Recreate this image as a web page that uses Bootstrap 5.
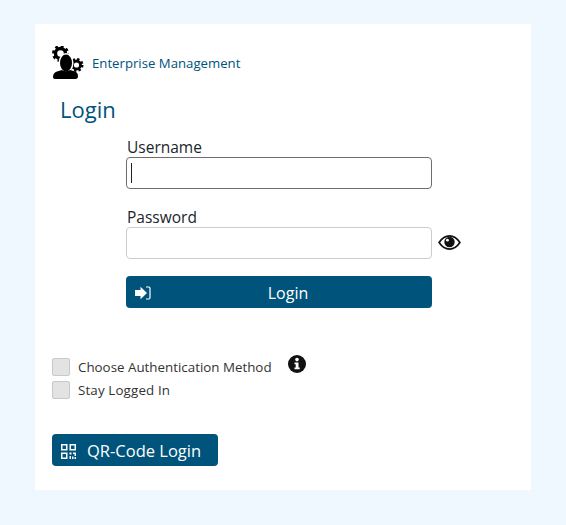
<!DOCTYPE html>
<html lang="en">
<head>
    <meta charset="UTF-8">
    <meta name="viewport" content="width=device-width, initial-scale=1.0">
    <title>Login</title>
    <link href="https://cdn.jsdelivr.net/npm/bootstrap@5.3.0/dist/css/bootstrap.min.css" rel="stylesheet">
    <style>
        body {
            background: #f0f8ff;
            font-family: "Open Sans", "Noto Sans", sans-serif;
            color: #212529;
            height: 525px;
            overflow: hidden;
        }
        .login-panel {
            width: 496px;
            height: 466px;
            margin: 24px 0 0 35px;
            padding: 21px 17px 0;
            background: #fff;
        }
        .brand-row { height: 36px; }
        .brand-name { font-size: 13.2px; color: #00537a; margin-left: 8px; margin-top: 1px; }
        .page-title { font-size: 22px; line-height: 30px; color: #00537a; font-weight: 400; margin: 13px 0 0 8px; }
        .login-form { width: 306px; margin: 13px 0 0 74px; position: relative; }
        .field-label { font-size: 15.5px; line-height: 20px; margin: 0; padding-left: 1px; display: block; color: #212529; }
        .password-label { margin-top: 18px; }
        .login-input {
            height: 32px;
            border: 1px solid #ccc;
            border-radius: 4px;
            padding: 0 5px;
            box-shadow: none;
        }
        .login-input:focus { border-color: #6e6e6e; box-shadow: none; }
        .user-wrap { position: relative; }
        .text-caret { position: absolute; left: 5px; top: 6px; width: 1px; height: 20px; background: #222; }
        .eye-btn { position: absolute; left: 312px; top: 7px; line-height: 0; }
        .pw-wrap { position: relative; }
        .brand-btn {
            background: #00537a;
            color: #fff;
            border: 0;
            border-radius: 4px;
            height: 32px;
            font-size: 16px;
            line-height: 34px;
            padding: 0;
        }
        .brand-btn:hover { background: #00537a; color: #fff; }
        .submit-btn { width: 306px; margin-top: 17px; position: relative; padding-left: 18px; }
        .submit-btn svg { position: absolute; left: 9px; top: 10px; }
        .check-list { margin-top: 47px; }
        .check-row { height: 23px; font-size: 13.35px; color: #333; }
        .check-text { padding-top: 2px; }
        .stay-text { letter-spacing: .14px; }
        .fake-check {
            width: 18px;
            height: 18px;
            flex: none;
            margin: 0 8px 0 0;
            background: #e3e3e3;
            border: 1px solid #c9c9c9;
            border-radius: 2px;
            appearance: none;
        }
        .info-icon { margin-left: 16px; margin-top: -5px; line-height: 0; }
        .qr-btn { width: 166px; margin-top: 33px; display: flex; align-items: center; padding: 2px 0 0 9px; font-size: 16.5px; line-height: 30px; }
        .qr-btn svg { margin-right: 11px; }
    </style>
</head>
<body>
    <div class="login-panel">
        <div class="brand-row d-flex align-items-center">
            <svg width="32" height="34" viewBox="0 0 32 34" aria-hidden="true">
                <circle cx="8.500" cy="7.500" r="5" fill="none" stroke="#000" stroke-width="3.400"/>
                <circle cx="8.500" cy="7.500" r="7.200" fill="none" stroke="#000" stroke-width="2.600" stroke-dasharray="2.900 2.750"/>
                <circle cx="24.500" cy="19" r="4" fill="none" stroke="#000" stroke-width="2.800"/>
                <circle cx="24.500" cy="19" r="5.800" fill="none" stroke="#000" stroke-width="2.400" stroke-dasharray="2.300 2.250"/>
                <ellipse cx="14" cy="17" rx="7.500" ry="10" fill="#fff"/>
                <ellipse cx="14" cy="17" rx="6" ry="8.500" fill="#000"/>
                <path d="M1 31c0-3 1.500-4.500 4-5.500l5-1.500c2 1.500 6 1.500 8 0l5 1.500c2 .8 3 2.500 3 5 0 1.500-1 2.500-2.500 2.500H3c-1.200 0-2-1-2-2z" fill="#000"/>
            </svg>
            <span class="brand-name">Enterprise Management</span>
        </div>
        <h1 class="page-title">Login</h1>
        <form class="login-form">
            <label class="field-label" for="user">Username</label>
            <div class="user-wrap">
                <input class="form-control login-input" id="user" type="text" autofocus>
                <span class="text-caret"></span>
            </div>
            <label class="field-label password-label" for="pass">Password</label>
            <div class="pw-wrap">
                <input class="form-control login-input" id="pass" type="password">
                <span class="eye-btn">
                    <svg width="23" height="17" viewBox="0 0 24 18" aria-hidden="true">
                        <path d="M1 9c3-4.500 7-7 11-7s8 2.500 11 7c-3 4.500-7 7-11 7S4 13.500 1 9z" fill="#fff" stroke="#111" stroke-width="1.800"/>
                        <circle cx="12" cy="8.500" r="5.500" fill="#111"/>
                        <circle cx="9.800" cy="6.500" r="1.500" fill="#fff"/>
                    </svg>
                </span>
            </div>
            <button class="btn brand-btn submit-btn d-block" type="button">
                <svg width="16" height="14" viewBox="0 0 16 14" aria-hidden="true">
                    <path d="M0 4h5.500V.8L12 7l-6.500 6.200V10H0z" fill="#fff"/>
                    <path d="M11 1h2.800c.8 0 1.200.5 1.200 1.200v9.600c0 .7-.4 1.200-1.200 1.200H11" fill="none" stroke="#fff" stroke-width="1.200"/>
                </svg>
                Login
            </button>
        </form>
        <div class="check-list">
            <div class="check-row d-flex align-items-center">
                <input class="fake-check" type="checkbox" aria-label="Choose Authentication Method">
                <span class="check-text">Choose Authentication Method</span>
                <span class="info-icon">
                    <svg width="18" height="18" viewBox="0 0 18 18" aria-hidden="true">
                        <circle cx="9" cy="9" r="9" fill="#111"/>
                        <circle cx="9" cy="4.600" r="1.800" fill="#fff"/>
                        <path d="M6.500 7.500H10.500V12.500H11.700V14.300H6.500V12.500H7.700V9.300H6.500z" fill="#fff"/>
                    </svg>
                </span>
            </div>
            <div class="check-row d-flex align-items-center">
                <input class="fake-check" type="checkbox" aria-label="Stay Logged In">
                <span class="check-text stay-text">Stay Logged In</span>
            </div>
        </div>
        <button class="btn brand-btn qr-btn" type="button">
            <svg width="15" height="15" viewBox="0 0 15 15" aria-hidden="true">
                <path fill="#fff" fill-rule="evenodd" d="M0 0h6.500v6.500H0zM1.500 1.500V5H5V1.500zM8.500 0H15v6.500H8.500zM10 1.500V5h3.500V1.500zM0 8.500h6.500V15H0zM1.500 10v3.500H5V10zM8.500 8.500h2v2h-2zM12 8.500h3v3.500h-1.500v-2H12zM8.500 12H10v3H8.500zM11 12.500h1.500V15H11zM13.500 13H15v2h-1.500z"/>
            </svg>
            QR-Code Login
        </button>
    </div>
</body>
</html>
